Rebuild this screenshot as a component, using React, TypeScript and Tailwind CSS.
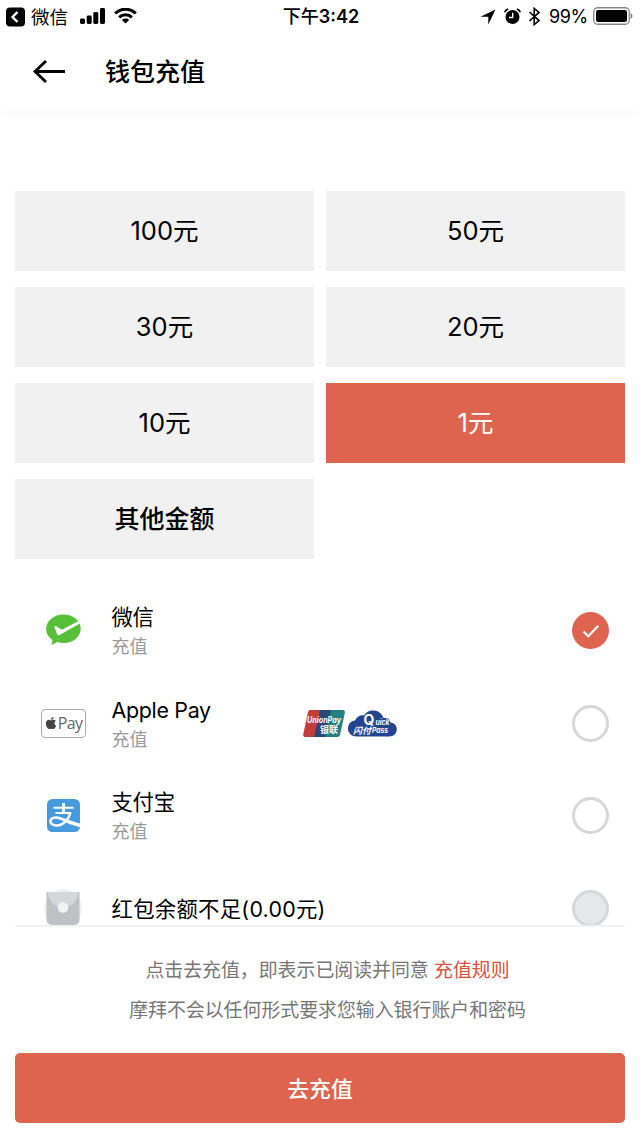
import type { ReactNode } from "react";
import { FaApple } from "react-icons/fa";

const amounts = [
  { label: "100元" },
  { label: "50元" },
  { label: "30元" },
  { label: "20元" },
  { label: "10元" },
  { label: "1元", active: true },
  { label: "其他金额", bold: true },
];

function StatusBar() {
  return (
    <div className="grid h-8 grid-cols-[1fr_auto_1fr] items-center pr-[7px] pl-[6px] text-[18px] leading-8">
      <div className="flex items-center">
        <svg width="19" height="20" viewBox="0 0 19 20">
          <rect y="0.5" width="19" height="19" rx="4" fill="#000" />
          <path d="M11.5 5 6.5 10l5 5" fill="none" stroke="#fff" strokeWidth="2.4" />
        </svg>
        <span className="ml-[6px] text-[18.5px]">微信</span>
        <svg className="ml-3" width="25" height="17" viewBox="0 0 25 17">
          <rect x="0" y="10.5" width="5" height="5.5" rx="1.4" />
          <rect x="6.7" y="7.5" width="5" height="8.5" rx="1.4" />
          <rect x="13.3" y="4" width="5" height="12" rx="1.4" />
          <rect x="20" y="0" width="5" height="16" rx="1.4" />
        </svg>
        <svg className="ml-[9px]" width="23" height="17" viewBox="0 0 23 17">
          <g fill="none" stroke="#000" strokeWidth="3">
            <path d="M1.2 5.4a14.7 14.7 0 0 1 20.6 0" />
            <path d="M5.1 9.3a9.2 9.2 0 0 1 12.8 0" />
          </g>
          <path d="M7.8 11.9a5.4 5.4 0 0 1 7.4 0L11.5 15.6z" />
        </svg>
      </div>
      <span className="pt-px pl-[3px] text-[18px] font-semibold">
        <span className="font-medium">下午</span>3:42
      </span>
      <div className="flex items-center justify-end">
        <svg width="16" height="16" viewBox="0 0 16 16">
          <path d="M15.5 0.5 8.3 15.5V7.8H0.5z" />
        </svg>
        <svg className="ml-[8px]" width="17" height="17" viewBox="0 0 17 17">
          <circle cx="8.5" cy="9" r="7" />
          <path d="M0.8 4.2A5 5 0 0 1 4.2 1M16.2 4.2A5 5 0 0 0 12.8 1" fill="none" stroke="#000" strokeWidth="1.8" />
          <path d="M8.7 4.7v4.8H5" fill="none" stroke="#fff" strokeWidth="1.4" />
        </svg>
        <svg className="ml-[7px]" width="13" height="19" viewBox="0 0 13 19">
          <path d="m1.5 5 9.5 8.6-4.8 4V1.4l4.8 4L1.5 14" fill="none" stroke="#000" strokeWidth="1.6" />
        </svg>
        <span className="ml-[8px] pt-px tracking-[-0.3px]">99%</span>
        <svg className="mb-px ml-[5px]" width="40" height="18" viewBox="0 0 40 18">
          <rect x="0.75" y="0.75" width="35.5" height="16.5" rx="4" fill="none" stroke="#888" strokeWidth="1.3" />
          <rect x="3" y="3" width="31" height="12" rx="2" />
          <path d="M37.5 6v6c1.4-.5 2-1.6 2-3s-.6-2.5-2-3z" fill="#888" />
        </svg>
      </div>
    </div>
  );
}

function WechatPayIcon() {
  return (
    <svg width="35" height="32" viewBox="0 0 35 32">
      <path
        d="M17.500 0.500C7.800 0.500 0.200 6.800 0.200 14.800c0 4.700 2.500 8.700 6.300 11.300L5.500 31l6-2.900c1.900.6 3.900.9 6 .9 9.700 0 17.200-6.300 17.200-14.300S27.200 0.500 17.500 0.500z"
        fill="#57c038"
      />
      <path
        d="M8.300 12.500c1-.8 2-.4 3 .4l3.400 2.100c.8.500 1.400.5 2.200.2L32 7.300l1.800 2.100L14 20.800c-1.500.8-2.500.3-3-.9z"
        fill="#fff"
      />
    </svg>
  );
}

function ApplePayIcon() {
  return (
    <div className="flex h-[29px] w-[45px] items-center justify-center rounded-[4px] border border-[#aaa] text-[#444]">
      <FaApple className="size-[14px]" />
      <span className="font-['Open_Sans',sans-serif] text-[16px] leading-none font-normal tracking-[-0.7px] text-[#666]">
        Pay
      </span>
    </div>
  );
}

function AlipayIcon() {
  return (
    <svg width="33" height="33" viewBox="0 0 33 33">
      <rect width="33" height="33" rx="5.500" fill="#469bdf" />
      <g fill="none" stroke="#fff">
        <path d="M6.500 8.800h20M8.500 14h15.500" strokeWidth="2" />
        <path d="M16.500 4v10" strokeWidth="3" />
        <path
          d="M23.500 13.500c-1.500 5.500-5 10-9.300 12-4.700 2-10.500.7-10.700-3-.2-3.500 4.500-5 9.500-3.300 5.500 1.900 12 5.300 20 7.300"
          strokeWidth="2.500"
        />
        <path d="M17 21c5 2 10 4.200 16 5.300" strokeWidth="3.500" />
      </g>
    </svg>
  );
}

function RedPacketIcon() {
  return (
    <svg width="40" height="38" viewBox="0 0 40 38">
      <circle cx="20" cy="19" r="19" fill="#f1f1f2" />
      <path d="M3.500 3h33V31a5 5 0 0 1-5 5h-23a5 5 0 0 1-5-5z" fill="#bfc1c4" />
      <path d="M5 3h30c0 9-7 15.500-15 15.500S5 12 5 3z" fill="#d6d7d9" />
      <circle cx="20" cy="18.500" r="5.300" fill="#f4f4f5" />
    </svg>
  );
}

function CardBadges() {
  return (
    <div className="ml-auto flex items-center gap-[3px] pb-[3px]">
      <svg width="42" height="27" viewBox="0 0 42 27">
        <path d="M5 0h13l-6 27H2Q-.3 27 .3 24L5 2Q5.500 0 7 0z" fill="#c13c3b" />
        <path d="M17 0h12l-6 27H11z" fill="#29477a" />
        <path d="M28 0h12q2.400 0 1.800 3L37 25q-.5 2-2.500 2H22z" fill="#267f7f" />
        <text
          x="4"
          y="13"
          textLength="34"
          lengthAdjust="spacingAndGlyphs"
          fontSize="9"
          fontWeight="700"
          fontStyle="italic"
          fill="#fff"
        >
          UnionPay
        </text>
        <text x="17" y="23" textLength="18" fontSize="9" fontWeight="700" fill="#fff">
          银联
        </text>
      </svg>
      <svg width="49" height="27" viewBox="0 0 49 27">
        <path
          d="M9 26.500C3.500 26.500 0 23 0 18.500c0-4.500 3-7.500 7-8C9 6.500 12.500 4.500 16 5.500 18 2 22 0 26 .5c5 .4 8 3.500 9.500 7.500 4-.5 6.500 1.500 7 4.500 4 .5 6.500 3.200 6.300 7-.2 4-3 7-7.800 7z"
          fill="#24458d"
        />
        <g fontWeight="700" fill="#fff">
          <text x="15.500" y="15" fontSize="14">
            Q
          </text>
          <text x="27.500" y="14.500" textLength="14" lengthAdjust="spacingAndGlyphs" fontSize="7.500" fontStyle="italic">
            uick
          </text>
          <text x="5" y="23.500" textLength="18" fontSize="9" fontStyle="italic">
            闪付
          </text>
          <text x="24" y="23" textLength="16" lengthAdjust="spacingAndGlyphs" fontSize="7.500" fontStyle="italic">
            Pass
          </text>
        </g>
      </svg>
    </div>
  );
}

function Radio({ state }: { state: "checked" | "empty" | "disabled" }) {
  if (state === "checked") {
    return (
      <div className="flex size-[37px] items-center justify-center rounded-full bg-[#df6450]">
        <svg className="mt-px" width="18" height="14" viewBox="0 0 18 14">
          <path d="m1.500 7.500 4.800 4.800L16.300 1.800" fill="none" stroke="#fff" strokeWidth="2.200" />
        </svg>
      </div>
    );
  }
  if (state === "disabled") {
    return <div className="size-[37px] rounded-full border-[3px] border-[#d6d7d8] bg-[#e6e7e8]" />;
  }
  return <div className="size-[37px] rounded-full border-[3px] border-[#d6d7d8]" />;
}

type MethodProps = {
  icon: ReactNode;
  title: string;
  subtitle?: string;
  extra?: ReactNode;
  state: "checked" | "empty" | "disabled";
};

function Method({ icon, title, subtitle, extra, state }: MethodProps) {
  return (
    <div className="flex h-[92.7px] shrink-0 items-center pr-[31px] pl-[31px]">
      <div className="flex w-16 justify-center">{icon}</div>
      <div className="ml-[16.5px] flex w-[285px] items-center pt-[3px] whitespace-nowrap">
        <div>
          <p className={`text-[21.400px] leading-[29px] ${subtitle ? "tracking-[-0.3px]" : "tracking-[0.25px]"}`}>
            {title}
          </p>
          {subtitle && <p className="pt-px text-[18px] leading-[28px] text-[#999]">{subtitle}</p>}
        </div>
        {extra}
      </div>
      <div className="ml-auto">
        <Radio state={state} />
      </div>
    </div>
  );
}

export default function App() {
  return (
    <main className="flex h-[1138px] w-[640px] flex-col overflow-hidden bg-white font-['Inter','Noto_Sans_CJK_SC',sans-serif] text-black">
      <StatusBar />
      <header className="flex h-[79px] shrink-0 items-center pl-[33px] shadow-[0_6px_6px_-4px_rgba(0,0,0,0.04)]">
        <svg width="33" height="24" viewBox="0 0 33 24">
          <path d="M32 11.500H2M13 1 2 11.500 13 22" fill="none" stroke="#000" strokeWidth="2.900" />
        </svg>
        <h1 className="ml-[39px] pt-[3px] text-[25px] font-medium">钱包充值</h1>
      </header>

      <section className="mt-[80px] grid shrink-0 grid-cols-2 gap-x-3 gap-y-4 px-[15px]">
        {amounts.map((item) => (
          <button
            key={item.label}
            className={`flex h-20 items-center justify-center pt-px ${
              item.active ? "bg-[#df6450] text-white" : "bg-[#f1f1f1]"
            } ${item.bold ? "text-[25px] font-medium" : "text-[25.500px]"}`}
          >
            {item.label}
          </button>
        ))}
      </section>

      <section className="mt-[25px] flex h-[341px] shrink-0 flex-col overflow-hidden">
        <Method icon={<WechatPayIcon />} title="微信" subtitle="充值" state="checked" />
        <Method icon={<ApplePayIcon />} title="Apple Pay" subtitle="充值" extra={<CardBadges />} state="empty" />
        <Method icon={<AlipayIcon />} title="支付宝" subtitle="充值" state="empty" />
        <Method icon={<RedPacketIcon />} title="红包余额不足(0.00元)" state="disabled" />
      </section>

      <footer className="mx-[15px] flex flex-1 flex-col border-t-2 border-[#f2f2f3] text-center text-[18.900px] leading-[40px] text-[#777]">
        <p className="mt-[24px] pl-[15px]">
          点击去充值，即表示已阅读并同意 <span className="text-[#d94f3d]">充值规则</span>
        </p>
        <p className="pl-[15px]">摩拜不会以任何形式要求您输入银行账户和密码</p>
        <button className="mt-[22px] h-[70px] rounded-[5px] bg-[#df6450] pt-px text-[21.800px] font-medium text-white">
          去充值
        </button>
      </footer>
    </main>
  );
}
